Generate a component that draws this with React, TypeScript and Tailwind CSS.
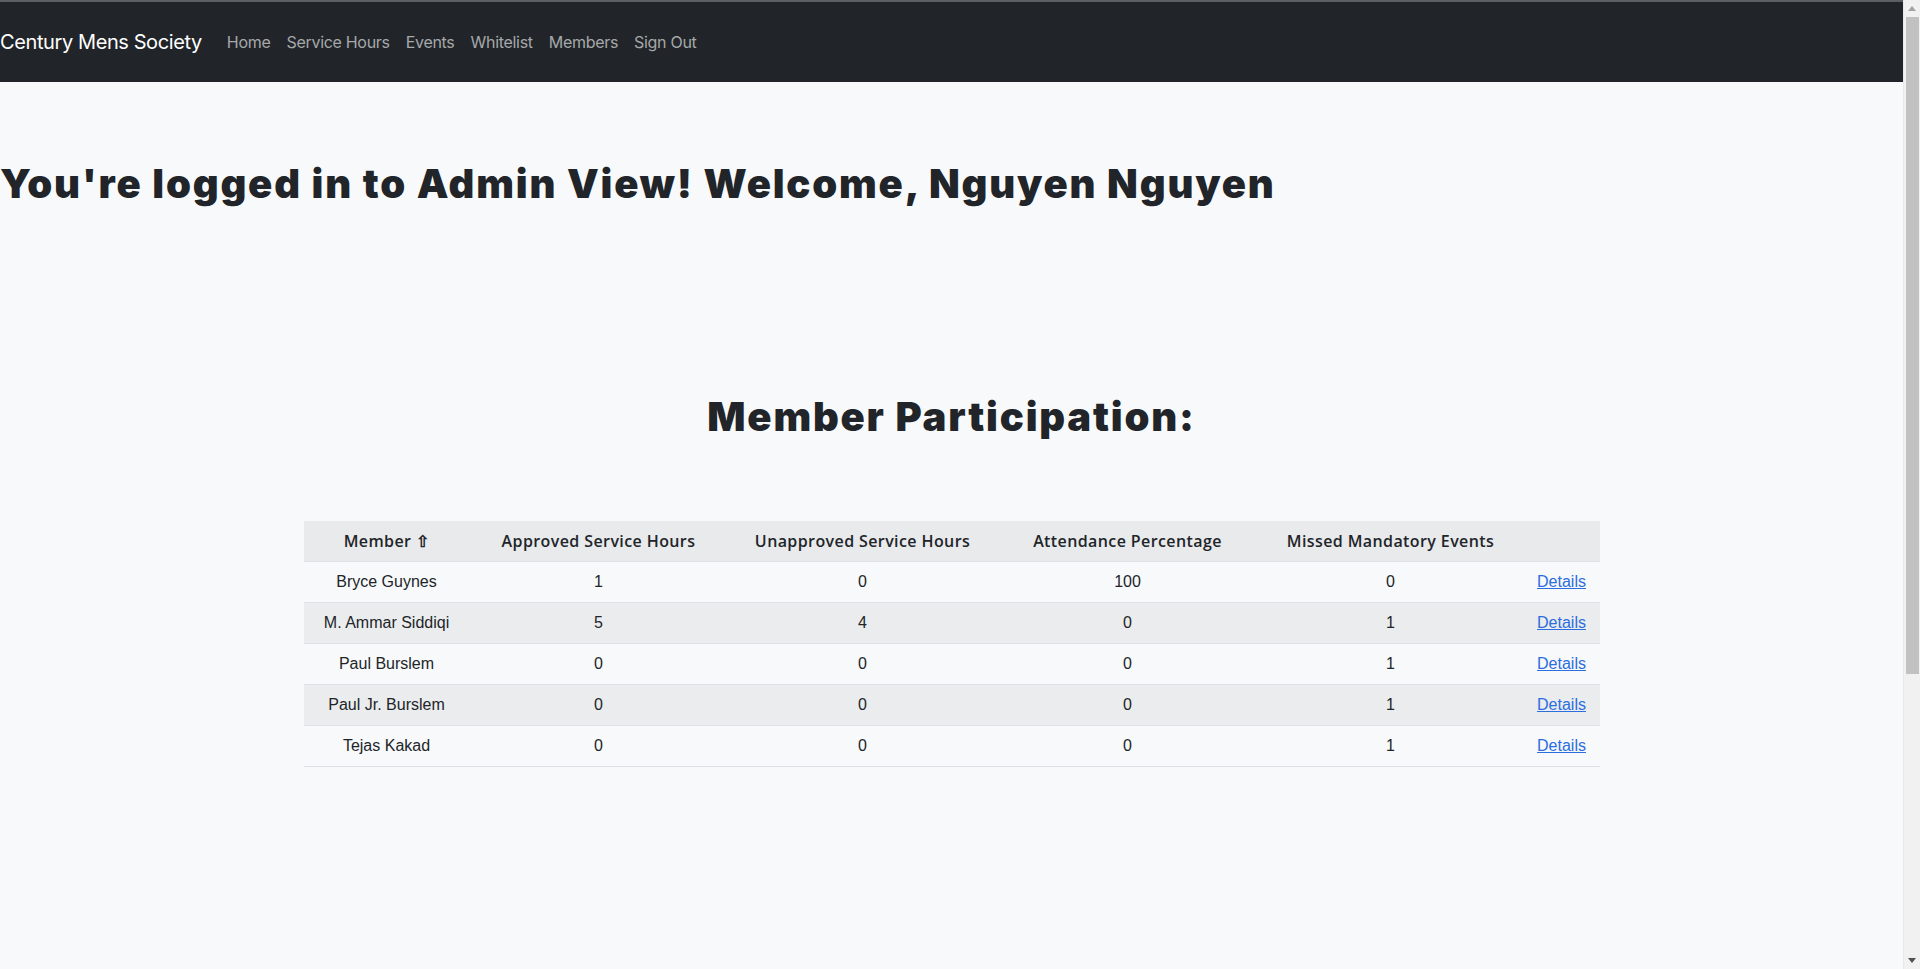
const navLinks = ["Home", "Service Hours", "Events", "Whitelist", "Members", "Sign Out"];

const members = [
  { name: "Bryce Guynes", approved: 1, unapproved: 0, attendance: 100, missed: 0 },
  { name: "M. Ammar Siddiqi", approved: 5, unapproved: 4, attendance: 0, missed: 1 },
  { name: "Paul Burslem", approved: 0, unapproved: 0, attendance: 0, missed: 1 },
  { name: "Paul Jr. Burslem", approved: 0, unapproved: 0, attendance: 0, missed: 1 },
  { name: "Tejas Kakad", approved: 0, unapproved: 0, attendance: 0, missed: 1 },
];

const headers = [
  "Member \u21E7",
  "Approved Service Hours",
  "Unapproved Service Hours",
  "Attendance Percentage",
  "Missed Mandatory Events",
  "",
];

function Scrollbar() {
  return (
    <div className="w-[17px] h-full bg-[#f1f1f1] flex flex-col items-center border-l border-[#e8e8e8]">
      <div className="h-[17px] w-full flex items-center justify-center">
        <svg width="8" height="5" viewBox="0 0 8 5">
          <path d="M4 0 L8 5 L0 5 Z" fill="#a3a3a3" />
        </svg>
      </div>
      <div className="w-[13px] h-[657px] bg-[#c1c1c1]" />
      <div className="flex-1" />
      <div className="h-[17px] w-full flex items-center justify-center">
        <svg width="8" height="5" viewBox="0 0 8 5">
          <path d="M0 0 L8 0 L4 5 Z" fill="#505050" />
        </svg>
      </div>
    </div>
  );
}

export default function App() {
  return (
    <div className="flex h-screen overflow-hidden bg-[#f8f9fa] text-[#212529]">
      <div className="flex-1 min-w-0 overflow-hidden">
        {/* Navbar */}
        <nav className="border-t-2 border-[#5c5f63] bg-[#212529] h-[82px] flex items-center font-['Inter',sans-serif]">
          <span className="text-[20px] text-white mr-[17px] tracking-[-0.4px]">
            Century Mens Society
          </span>
          <ul className="flex items-center">
            {navLinks.map((l) => (
              <li key={l}>
                <a className="block px-2 text-[16px] text-[#a6a8aa] tracking-[-0.3px]">{l}</a>
              </li>
            ))}
          </ul>
        </nav>

        {/* Welcome heading */}
        <h1 className="mt-[78px] text-[40px] leading-[48px] font-black font-['Inter',sans-serif] tracking-[1.8px]">
          You're logged in to Admin View! Welcome, Nguyen Nguyen
        </h1>

        {/* Participation */}
        <h2 className="mt-[185px] text-center text-[40px] leading-[48px] font-black font-['Inter',sans-serif] tracking-[1.8px]">
          Member Participation:
        </h2>

        <div className="mt-[80px] flex justify-center">
          <table className="w-[1296px] table-fixed border-collapse">
            <colgroup>
              <col className="w-[166px]" />
              <col className="w-[258px]" />
              <col className="w-[270px]" />
              <col className="w-[260px]" />
              <col className="w-[266px]" />
              <col className="w-[76px]" />
            </colgroup>
            <thead>
              <tr className="bg-[#e9eaec] border-b border-[#dee2e6]">
                {headers.map((h, i) => (
                  <th
                    key={i}
                    className="h-[40px] px-2 text-center text-[16px] font-semibold font-['Open_Sans',sans-serif] tracking-[0.4px] whitespace-nowrap"
                  >
                    {h}
                  </th>
                ))}
              </tr>
            </thead>
            <tbody className="font-['Liberation_Sans',Arial,sans-serif] text-[16px]">
              {members.map((m, i) => (
                <tr
                  key={m.name}
                  className={
                    i % 2 === 1
                      ? "bg-[#ebeced] border-b border-[#dee2e6]"
                      : "border-b border-[#dee2e6]"
                  }
                >
                  <td className="h-[41px] px-2 text-center">{m.name}</td>
                  <td className="px-2 text-center">{m.approved}</td>
                  <td className="px-2 text-center">{m.unapproved}</td>
                  <td className="px-2 text-center">{m.attendance}</td>
                  <td className="px-2 text-center">{m.missed}</td>
                  <td className="px-2 text-center">
                    <a className="text-[#2a6ee0] underline cursor-pointer">Details</a>
                  </td>
                </tr>
              ))}
            </tbody>
          </table>
        </div>
      </div>
      <Scrollbar />
    </div>
  );
}
